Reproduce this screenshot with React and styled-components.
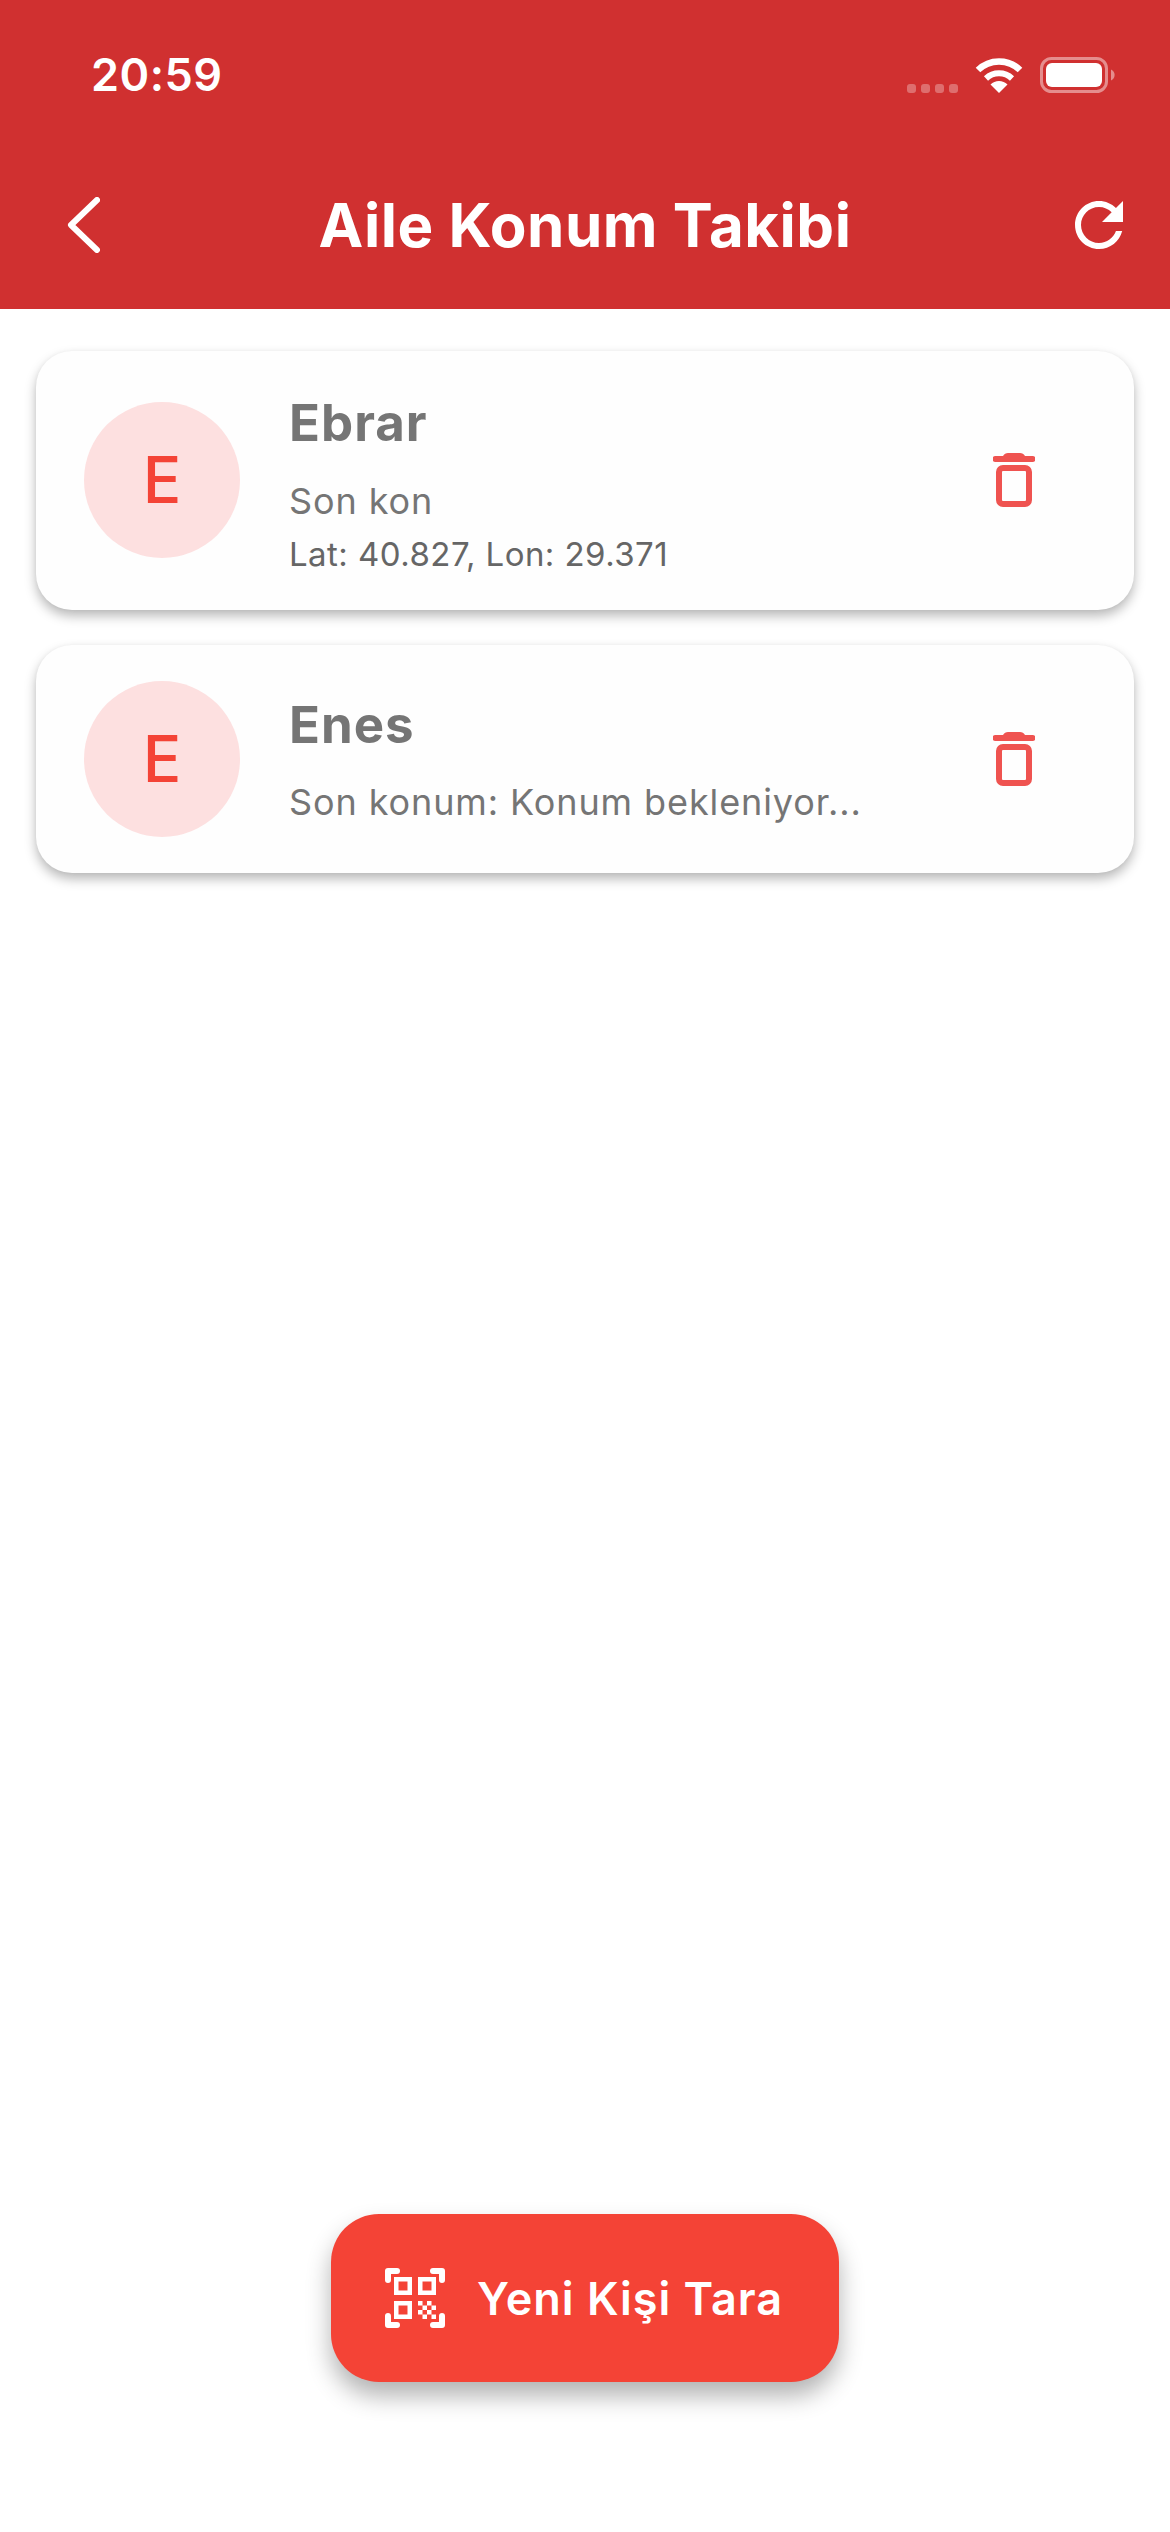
import React from 'react';
import styled, { createGlobalStyle } from 'styled-components';

const GlobalStyle = createGlobalStyle`
    html, body {
        margin: 0;
        padding: 0;
        background: #ffffff;
    }
    * {
        box-sizing: border-box;
    }
`;

const Screen = styled.div`
    width: 1170px;
    height: 2532px;
    display: flex;
    flex-direction: column;
    background: #ffffff;
    font-family: Inter, "Noto Sans", sans-serif;
    overflow: hidden;
`;

const Header = styled.header`
    background: #d03030;
    color: #ffffff;
    height: 309px;
    flex-shrink: 0;
`;

const StatusBar = styled.div`
    height: 141px;
    padding: 8px 55px 0 91px;
    display: flex;
    align-items: center;
    justify-content: space-between;
`;

const Time = styled.span`
    font-size: 45px;
    font-weight: 600;
    line-height: 54px;
    letter-spacing: 0.5px;
`;

const StatusIcons = styled.div`
    display: flex;
    align-items: flex-end;
`;

const SignalDots = styled.div`
    display: flex;
    gap: 5px;
    margin-right: 17px;
`;

const SignalDot = styled.span`
    width: 9px;
    height: 9px;
    border-radius: 3px;
    background: rgba(255, 255, 255, 0.3);
`;

const WifiIcon = styled.svg`
    width: 48px;
    height: 36px;
    margin-right: 17px;
    display: block;
`;

const BatteryIcon = styled.svg`
    width: 75px;
    height: 36px;
    display: block;
`;

const Toolbar = styled.div`
    height: 168px;
    display: grid;
    grid-template-columns: 1fr auto 1fr;
    align-items: center;
`;

const BackIcon = styled.svg`
    width: 33px;
    height: 56px;
    margin-left: 67px;
    display: block;
`;

const Title = styled.h1`
    margin: 0;
    font-size: 60px;
    font-weight: 700;
    line-height: 72px;
    letter-spacing: 0.5px;
`;

const RefreshIcon = styled.svg`
    width: 72px;
    height: 72px;
    justify-self: end;
    margin-right: 35px;
    display: block;
`;

const CardList = styled.main`
    flex: 1;
    padding: 42px 36px 0;
    display: flex;
    flex-direction: column;
    gap: 35px;
`;

const Card = styled.article`
    display: flex;
    align-items: center;
    padding: 36px 99px 36px 48px;
    background: #fefefe;
    border-radius: 36px;
    box-shadow: 0 6px 12px rgba(0, 0, 0, 0.28), 0 0 4px rgba(0, 0, 0, 0.03);
`;

const Avatar = styled.div`
    width: 156px;
    height: 156px;
    border-radius: 50%;
    background: #fde0e0;
    color: #f44336;
    font-size: 64px;
    font-weight: 500;
    line-height: 1;
    display: flex;
    align-items: center;
    justify-content: center;
    flex-shrink: 0;
    margin-right: 49px;
`;

const Info = styled.div`
    flex: 1;
    min-width: 0;
`;

const Name = styled.div`
    font-size: 51px;
    font-weight: 700;
    line-height: 72px;
    color: #757575;
    letter-spacing: 1px;
    margin-bottom: 19.5px;
`;

const LastSeen = styled.div`
    font-size: 36px;
    line-height: 44px;
    color: #757575;
    letter-spacing: 0.9px;
    margin-bottom: 4px;
`;

const Coords = styled.div`
    font-size: 33px;
    line-height: 40px;
    color: #666666;
    letter-spacing: 0.45px;
    margin-top: 11px;
`;

const TrashIcon = styled.svg`
    width: 42px;
    height: 54px;
    display: block;
    flex-shrink: 0;
`;

const Footer = styled.div`
    display: flex;
    justify-content: center;
    padding-bottom: 150px;
`;

const ScanButton = styled.button`
    width: 508px;
    height: 168px;
    border: none;
    outline: none;
    border-radius: 48px;
    background: #f44336;
    color: #ffffff;
    display: flex;
    align-items: center;
    padding: 0 0 0 48px;
    font-family: inherit;
    font-size: 45px;
    font-weight: 600;
    letter-spacing: 1px;
    box-shadow: 0 14px 24px rgba(0, 0, 0, 0.3);
`;

const ScanIcon = styled.svg`
    width: 72px;
    height: 72px;
    margin-right: 26px;
    display: block;
`;

const contacts = [
    { name: 'Ebrar', status: 'Son kon', coords: 'Lat: 40.827, Lon: 29.371' },
    { name: 'Enes', status: 'Son konum: Konum bekleniyor...' },
];

const Trash = () => (
    <TrashIcon viewBox="0 0 42 54">
        <path fill="#ef5350" d="M2.5 3H10C11 1 13 0 15 0h12c2 0 4 1 5 3h7.5a2.5 2.5 0 0 1 0 6h-37a2.5 2.5 0 0 1 0-6z" />
        <rect x="6" y="15" width="30" height="36" rx="4" fill="none" stroke="#ef5350" strokeWidth="6" />
    </TrashIcon>
);

const ContactCard = ({ name, status, coords }) => (
    <Card>
        <Avatar>{name[0]}</Avatar>
        <Info>
            <Name>{name}</Name>
            <LastSeen>{status}</LastSeen>
            {coords && <Coords>{coords}</Coords>}
        </Info>
        <Trash />
    </Card>
);

export default function App() {
    return (
        <Screen>
            <GlobalStyle />
            <Header>
                <StatusBar>
                    <Time>20:59</Time>
                    <StatusIcons>
                        <SignalDots>
                            {[0, 1, 2, 3].map(i => <SignalDot key={i} />)}
                        </SignalDots>
                        <WifiIcon viewBox="0 0 48 36">
                            <path d="M3 13A30 30 0 0 1 45 13" fill="none" stroke="#fff" strokeWidth="6.5" />
                            <path d="M11 21.5A19 19 0 0 1 37 21.5" fill="none" stroke="#fff" strokeWidth="6" />
                            <path d="M24 36L15.5 27.5A12 12 0 0 1 32.5 27.5Z" fill="#fff" />
                        </WifiIcon>
                        <BatteryIcon viewBox="0 0 75 36">
                            <rect x="1.5" y="1.5" width="65" height="33" rx="10" fill="none" stroke="#fff" strokeOpacity="0.45" strokeWidth="3" />
                            <rect x="6" y="6" width="56" height="24" rx="6" fill="#fff" />
                            <path d="M71 12.5a6 6 0 0 1 0 11z" fill="#fff" fillOpacity="0.45" />
                        </BatteryIcon>
                    </StatusIcons>
                </StatusBar>
                <Toolbar>
                    <BackIcon viewBox="0 0 33 56">
                        <path d="M30 3L4 28L30 53" fill="none" stroke="#fff" strokeWidth="6" strokeLinecap="round" strokeLinejoin="round" />
                    </BackIcon>
                    <Title>Aile Konum Takibi</Title>
                    <RefreshIcon viewBox="0 0 24 24">
                        <path fill="#fff" d="M17.65 6.35C16.2 4.9 14.21 4 12 4c-4.42 0-7.99 3.58-7.99 8s3.57 8 7.99 8c3.73 0 6.84-2.55 7.73-6h-2.08c-.82 2.33-3.04 4-5.65 4-3.31 0-6-2.69-6-6s2.69-6 6-6c1.66 0 3.14.69 4.22 1.78L13 11h7V4l-2.35 2.35z" />
                    </RefreshIcon>
                </Toolbar>
            </Header>
            <CardList>
                {contacts.map(c => <ContactCard key={c.name} {...c} />)}
            </CardList>
            <Footer>
                <ScanButton>
                    <ScanIcon viewBox="0 0 24 24">
                        <path fill="#fff" d="M9.5 6.5v3h-3v-3h3M11 5H5v6h6V5zm-1.5 9.5v3h-3v-3h3M11 13H5v6h6v-6zm6.5-6.5v3h-3v-3h3M19 5h-6v6h6V5zm-6 8h1.5v1.5H13V13zm1.5 1.5H16V16h-1.5v-1.5zM16 13h1.5v1.5H16V13zm-3 3h1.5v1.5H13V16zm1.5 1.5H16V19h-1.5v-1.5zM16 16h1.5v1.5H16V16zm1.5-1.5H19V16h-1.5v-1.5zm0 3H19V19h-1.5v-1.5z" />
                        <path fill="none" stroke="#fff" strokeWidth="2" strokeLinecap="round" strokeLinejoin="round" d="M3 6V3h3M18 3h3v3M21 18v3h-3M6 21H3v-3" />
                    </ScanIcon>
                    Yeni Kişi Tara
                </ScanButton>
            </Footer>
        </Screen>
    );
}
